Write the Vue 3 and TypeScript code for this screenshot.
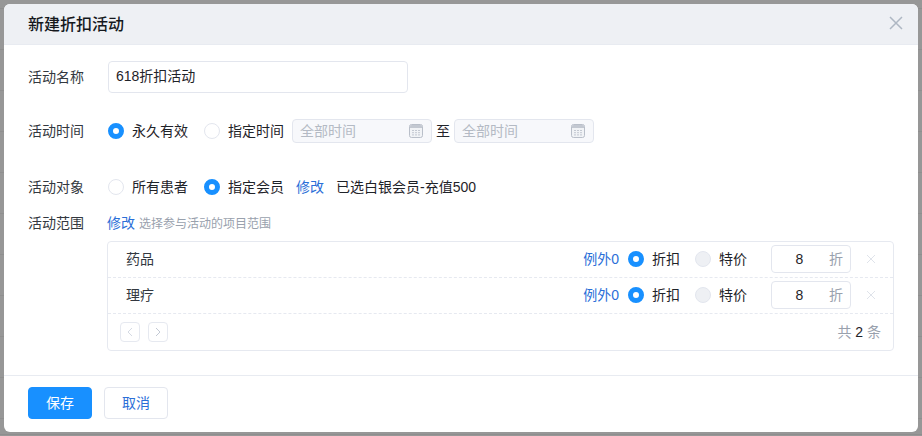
<script setup lang="ts">
const rows = [
  { name: '药品', exc: 0, val: 8 },
  { name: '理疗', exc: 0, val: 8 },
]
</script>

<template>
  <div class="backdrop">
    <div class="modal">
      <header class="head">
        <h2 class="title">新建折扣活动</h2>
        <svg class="close" width="14" height="14" viewBox="0 0 14 14"><path d="M1 1L13 13M13 1L1 13" stroke="#aeb7c3" stroke-width="1.5" fill="none" /></svg>
      </header>
      <div class="body">
        <div class="row r-name">
          <span class="label">活动名称</span>
          <div class="text-input">618折扣活动</div>
        </div>
        <div class="row r-time">
          <span class="label">活动时间</span>
          <span class="radio on"></span><span class="rlabel w-a">永久有效</span>
          <span class="radio"></span><span class="rlabel">指定时间</span>
          <div class="date">
            <span>全部时间</span>
            <svg width="14" height="14" viewBox="0 0 14 14"><rect x="0.5" y="0.5" width="13" height="13" rx="2" fill="#f1f3f6" stroke="#b9bfc9"/><path d="M1 2.5a1.5 1.5 0 0 1 1.5-1.5h9a1.5 1.5 0 0 1 1.5 1.5V4H1z" fill="#c3c8d1"/><path d="M3 6.5h2M6 6.5h2M9 6.5h2M3 8.7h2M6 8.7h2M9 8.7h2M3 10.9h2M6 10.9h2M9 10.9h2" stroke="#c3c8d1" stroke-width="1"/></svg>
          </div>
          <span class="to">至</span>
          <div class="date">
            <span>全部时间</span>
            <svg width="14" height="14" viewBox="0 0 14 14"><rect x="0.5" y="0.5" width="13" height="13" rx="2" fill="#f1f3f6" stroke="#b9bfc9"/><path d="M1 2.5a1.5 1.5 0 0 1 1.5-1.5h9a1.5 1.5 0 0 1 1.5 1.5V4H1z" fill="#c3c8d1"/><path d="M3 6.5h2M6 6.5h2M9 6.5h2M3 8.7h2M6 8.7h2M9 8.7h2M3 10.9h2M6 10.9h2M9 10.9h2" stroke="#c3c8d1" stroke-width="1"/></svg>
          </div>
        </div>
        <div class="row r-target">
          <span class="label">活动对象</span>
          <span class="radio"></span><span class="rlabel w-a">所有患者</span>
          <span class="radio on"></span><span class="rlabel">指定会员</span>
          <a class="link edit1">修改</a>
          <span class="chosen">已选白银会员-充值500</span>
        </div>
        <div class="row r-range">
          <span class="label">活动范围</span>
          <a class="link edit2">修改</a>
          <span class="hint">选择参与活动的项目范围</span>
        </div>
        <div class="table">
          <div v-for="r in rows" :key="r.name" class="trow">
            <span class="tname">{{ r.name }}</span>
            <a class="link exc">例外{{ r.exc }}</a>
            <span class="radio on"></span><span class="rlabel t-a">折扣</span>
            <span class="radio off"></span><span class="rlabel t-b">特价</span>
            <div class="num"><span class="numval">{{ r.val }}</span><span class="unit">折</span></div>
            <svg class="del" width="10" height="10" viewBox="0 0 10 10"><path d="M1 1L9 9M9 1L1 9" stroke="#dfe3ea" stroke-width="1" fill="none"/></svg>
          </div>
          <div class="pager">
            <span class="pg"><svg width="6" height="10" viewBox="0 0 6 10"><path d="M5 1L1 5L5 9" stroke="#d5dae3" fill="none"/></svg></span>
            <span class="pg"><svg width="6" height="10" viewBox="0 0 6 10"><path d="M1 1L5 5L1 9" stroke="#c3c9d4" fill="none"/></svg></span>
            <span class="total">共 <b>2</b> 条</span>
          </div>
        </div>
      </div>
      <footer class="foot">
        <button class="btn primary">保存</button>
        <button class="btn">取消</button>
      </footer>
    </div>
  </div>
</template>

<style>
html, body { margin: 0; padding: 0; }
</style>

<style scoped>
.backdrop {
  width: 922px;
  height: 436px;
  box-sizing: border-box;
  padding: 4px;
  background-color: #979797;
  background-image: linear-gradient(#8e8e8e, #8e8e8e), linear-gradient(#8f8f8f 1px, transparent 1px);
  background-size: 100% 1px, 100% 41px;
  background-position: 0 434px, 0 8px;
  background-repeat: no-repeat, repeat-y;
  overflow: hidden;
  font-family: "Liberation Sans", "Noto Sans CJK SC", sans-serif;
  font-size: 14px;
  color: #1f2329;
}
.modal {
  height: 428px;
  background: #fff;
  border-radius: 6px;
  overflow: hidden;
  display: flex;
  flex-direction: column;
}
.head {
  height: 41px;
  flex: none;
  box-sizing: border-box;
  background: #eef0f4;
  border-bottom: 1px solid #e8ebf1;
  display: flex;
  align-items: center;
  justify-content: space-between;
  padding: 0 15px 0 24px;
}
.title { margin: 0; padding-top: 2px; font-size: 16px; font-weight: 500; color: #15181d; line-height: 24px; }
.close { margin-bottom: 2px; }
.body { flex: 1; padding: 0 24px; min-height: 0; }
.row { display: flex; align-items: center; }
.label, .rlabel, .link, .chosen, .hint, .tname, .unit, .to, .total, .date span { padding-bottom: 2px; }
.label { width: 80px; flex: none; color: #333840; }
.r-name { margin-top: 16px; height: 32px; }
.r-time { margin-top: 26px; height: 24px; }
.r-target { margin-top: 32px; height: 24px; }
.r-range { margin-top: 12px; height: 24px; }
.text-input {
  width: 300px;
  height: 32px;
  box-sizing: border-box;
  border: 1px solid #e3e6ee;
  border-radius: 4px;
  padding: 0 7px;
  line-height: 28px;
  color: #1f2329;
}
.radio {
  width: 16px;
  height: 16px;
  box-sizing: border-box;
  border: 1px solid #e3e6ee;
  border-radius: 50%;
  background: #fff;
  flex: none;
}
.radio.on { border: 5px solid #1890ff; }
.radio.off { background: #eef0f4; }
.rlabel { margin-left: 8px; }
.w-a { margin-right: 16px; }
.date {
  width: 140px;
  height: 24px;
  box-sizing: border-box;
  border: 1px solid #e3e6ee;
  border-radius: 4px;
  background: #f7f8fb;
  display: flex;
  align-items: center;
  justify-content: space-between;
  padding: 0 8px 0 7px;
  color: #b4bac4;
  margin-left: 8px;
}
.to { margin-left: 4px; margin-right: -4px; }
.link { color: #2b6fd8; }
.edit1 { margin-left: 12px; }
.edit2 { margin-left: -1px; }
.chosen { margin-left: 12px; }
.hint { margin-left: 4px; font-size: 12px; color: #99a1ad; }
.table {
  width: 787px;
  height: 110px;
  box-sizing: border-box;
  margin-top: 6px;
  margin-left: 79px;
  border: 1px solid #e6e9f0;
  border-radius: 4px;
}
.trow {
  height: 36px;
  box-sizing: border-box;
  border-bottom: 1px dashed #e6e9f0;
  padding-bottom: 1px;
  display: flex;
  align-items: center;
}
.tname { margin-left: 18px; flex: 1; color: #333840; }
.exc { margin-right: 9px; }
.t-a { margin-right: 15px; }
.t-b { margin-right: 24px; }
.num {
  width: 80px;
  height: 28px;
  box-sizing: border-box;
  border: 1px solid #e3e6ee;
  border-radius: 4px;
  display: flex;
  align-items: center;
  padding: 0 7px 0 0;
}
.numval { flex: 1; text-align: center; padding-right: 2px; }
.unit { color: #99a1ad; }
.del { margin: 0 17px 0 15px; }
.pager {
  height: 36px;
  display: flex;
  align-items: center;
  gap: 8px;
  padding: 0 12px 0 12px;
}
.pg {
  width: 20px;
  height: 20px;
  box-sizing: border-box;
  border: 1px solid #e6e9f0;
  border-radius: 4px;
  display: flex;
  align-items: center;
  justify-content: center;
}
.total { margin-left: auto; color: #99a1ad; }
.total b { font-weight: 400; color: #1f2329; }
.foot {
  height: 57px;
  flex: none;
  box-sizing: border-box;
  border-top: 1px solid #e8ebf1;
  padding: 11px 24px 0;
  display: flex;
  align-items: flex-start;
  gap: 12px;
}
.btn {
  width: 64px;
  height: 32px;
  box-sizing: border-box;
  border: 1px solid #e3e6ee;
  border-radius: 4px;
  background: #fff;
  color: #2b6fd8;
  font: inherit;
  padding: 0 0 2px;
}
.btn.primary { background: #1890ff; border-color: #1890ff; color: #fff; }
</style>
